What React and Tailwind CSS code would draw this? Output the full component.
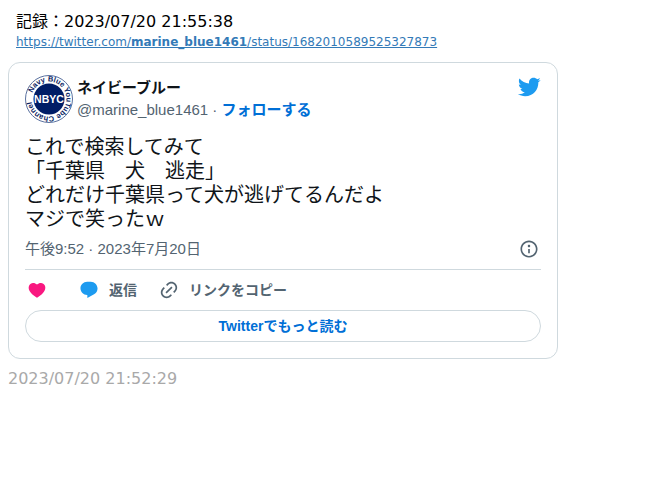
import React from "react";

const tweet = {
  url: "https://twitter.com/marine_blue1461/status/1682010589525327873",
  name: "ネイビーブルー",
  handle: "marine_blue1461",
  lines: [
    "これで検索してみて",
    "「千葉県　犬　逃走」",
    "どれだけ千葉県って犬が逃げてるんだよ",
    "マジで笑ったｗ",
  ],
  postedAt: "午後9:52 · 2023年7月20日",
};

const ICONS = {
  bird: "M23.643 4.937c-.835.37-1.732.62-2.675.733.962-.576 1.7-1.49 2.048-2.578-.9.534-1.897.922-2.958 1.13-.85-.904-2.06-1.47-3.4-1.47-2.572 0-4.658 2.086-4.658 4.66 0 .364.042.718.12 1.06-3.873-.195-7.304-2.05-9.602-4.868-.4.69-.63 1.49-.63 2.342 0 1.616.823 3.043 2.072 3.878-.764-.025-1.482-.234-2.11-.583v.06c0 2.257 1.605 4.14 3.737 4.568-.392.106-.803.162-1.227.162-.3 0-.593-.028-.877-.082.593 1.85 2.313 3.198 4.352 3.234-1.595 1.25-3.604 1.995-5.786 1.995-.376 0-.747-.022-1.112-.065 2.062 1.323 4.51 2.093 7.14 2.093 8.57 0 13.255-7.098 13.255-13.254 0-.2-.005-.402-.014-.602.91-.658 1.7-1.477 2.323-2.41z",
  info: "M13.5 8.5c0 .83-.67 1.5-1.5 1.5s-1.5-.67-1.5-1.5S11.17 7 12 7s1.5.67 1.5 1.5zM13 17v-5h-2v5h2zm-1 5.25c5.66 0 10.25-4.59 10.25-10.25S17.66 1.75 12 1.75 1.75 6.34 1.75 12 6.34 22.25 12 22.25zM20.25 12c0 4.56-3.69 8.25-8.25 8.25S3.75 16.56 3.75 12 7.44 3.75 12 3.75s8.25 3.69 8.25 8.25z",
  heart:
    "M20.884 13.19c-1.351 2.48-4.001 5.12-8.379 7.67l-.503.3-.504-.3c-4.379-2.55-7.029-5.19-8.382-7.67-1.36-2.5-1.41-4.86-.514-6.67.887-1.79 2.647-2.91 4.601-3.01 1.651-.09 3.368.56 4.798 2.01 1.429-1.45 3.146-2.1 4.796-2.01 1.954.1 3.714 1.22 4.601 3.01.896 1.81.846 4.17-.514 6.67z",
  reply:
    "M1.751 10c0-4.42 3.584-8 8.005-8h4.366c4.49 0 8.129 3.64 8.129 8.13 0 2.96-1.607 5.68-4.196 7.11l-8.054 4.46v-3.69h-.067c-4.49.1-8.183-3.51-8.183-8.01z",
  link: "M18.36 5.64c-1.95-1.96-5.11-1.96-7.07 0L9.88 7.05 8.46 5.64l1.42-1.42c2.73-2.73 7.16-2.73 9.9 0 2.73 2.74 2.73 7.17 0 9.9l-1.42 1.42-1.41-1.42 1.41-1.41c1.96-1.96 1.96-5.12 0-7.07zm-2.12 3.53l-7.07 7.07-1.41-1.41 7.07-7.07 1.41 1.41zm-12.02.71l1.42-1.42 1.41 1.42-1.41 1.41c-1.96 1.96-1.96 5.12 0 7.07 1.95 1.96 5.11 1.96 7.07 0l1.41-1.41 1.42 1.41-1.42 1.42c-2.73 2.73-7.16 2.73-9.9 0-2.73-2.74-2.73-7.17 0-9.9z",
};

const Icon = ({ name, className }) => (
  <svg viewBox="0 0 24 24" fill="currentColor" aria-hidden="true" className={className}>
    <path d={ICONS[name]} />
  </svg>
);

// Round channel badge with the name running along the ring
const Avatar = () => (
  <svg viewBox="0 0 96 96" aria-hidden="true" className="size-12 shrink-0">
    <defs>
      <path id="ring" d="M13 48a35 35 0 0 1 70 0a35 35 0 0 1 -70 0" />
    </defs>
    <circle cx="48" cy="48" r="47" fill="#fff" stroke="#5a719f" strokeWidth="2" />
    <circle cx="48" cy="48" r="31" fill="#001d66" />
    <g fontFamily="Liberation Sans, sans-serif" fontWeight="700">
      <text fontSize="15" fill="#0a2463" transform="rotate(20 48 48)">
        <textPath href="#ring">Navy Blue YouTube Channel</textPath>
      </text>
      <text x="48" y="55" fontSize="21" fill="#fff" textAnchor="middle">
        NBYC
      </text>
    </g>
  </svg>
);

const TweetCard = () => (
  <article className="rounded-xl border border-[#cfd9de] px-4 pt-3 pb-4 font-['Liberation_Sans','Noto_Sans_CJK_JP',sans-serif] text-[15px] leading-5 text-[#0f1419]">
    {/* Author */}
    <header className="flex items-start">
      <Avatar />
      <div className="ml-1 grow pt-px">
        <a href={tweet.url} className="block leading-6 font-bold">
          {tweet.name}
        </a>
        <div className="text-[#536471]">
          @{tweet.handle} ·{" "}
          <a href={tweet.url} className="font-bold text-[#006fd6]">
            フォローする
          </a>
        </div>
      </div>
      <a href={tweet.url} aria-label="Twitter">
        <Icon name="bird" className="size-6 text-[#1d9bf0]" />
      </a>
    </header>

    {/* Body */}
    <div className="mt-3 text-xl leading-6">
      {tweet.lines.map((line) => (
        <p key={line}>{line}</p>
      ))}
    </div>

    <div className="mt-2 flex items-center justify-between pr-0.5 text-[#536471]">
      <a href={tweet.url}>{tweet.postedAt}</a>
      <button type="button" aria-label="情報">
        <Icon name="info" className="size-5" />
      </button>
    </div>

    {/* Actions */}
    <div className="mt-2.5 flex items-center border-t border-[#cfd9de] py-2.5 pl-0.5 text-sm font-bold text-[#536471]">
      <button type="button" aria-label="いいね" className="mr-8">
        <Icon name="heart" className="size-5 text-[#f91880]" />
      </button>
      <button type="button" className="mr-[22px] flex items-center gap-2.5">
        <Icon name="reply" className="size-5 text-[#1d9bf0]" />
        返信
      </button>
      <button type="button" className="flex items-center gap-2.5">
        <Icon name="link" className="size-5" />
        リンクをコピー
      </button>
    </div>

    <a
      href={tweet.url}
      className="flex h-8 items-center justify-center rounded-full border border-[#cfd9de] text-sm font-bold text-[#006fd6]"
    >
      Twitterでもっと読む
    </a>
  </article>
);

export default function App() {
  return (
    <main className="bg-white p-2 font-['DejaVu_Sans','Noto_Sans_CJK_JP',sans-serif] text-base text-black">
      <div className="px-2 pt-0.5">
        <p className="leading-6">記録：2023/07/20 21:55:38</p>
        <a href={tweet.url} className="block text-xs leading-4 text-[#337ab7] underline">
          https://twitter.com/<b>{tweet.handle}</b>/status/1682010589525327873
        </a>
      </div>
      <div className="mt-3 max-w-[550px]">
        <TweetCard />
      </div>
      <p className="mt-2 leading-6 text-[#a9a9a9]">2023/07/20 21:52:29</p>
    </main>
  );
}
